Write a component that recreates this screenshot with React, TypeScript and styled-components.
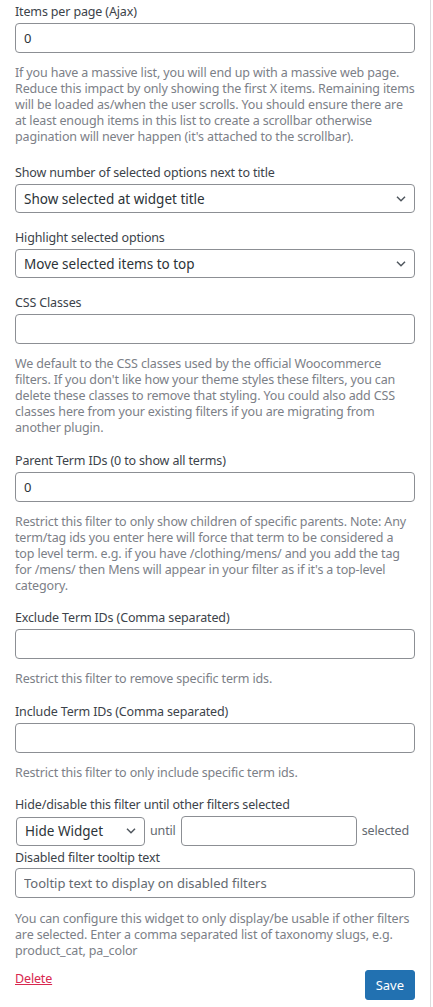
import styled, { createGlobalStyle } from "styled-components";

const GlobalStyle = createGlobalStyle`
  html, body {
    margin: 0;
    padding: 0;
    background: #fff;
  }
  body {
    font-family: "Noto Sans", "Open Sans", sans-serif;
  }
`;

const Panel = styled.form`
  box-sizing: border-box;
  width: 431px;
  min-height: 1007px;
  padding: 4px 15px 0 15px;
  border-right: 1px solid #dcdcde;
  font-size: 12.5px;
  letter-spacing: -0.15px;
  line-height: 16px;
  color: #3c434a;
`;

const Field = styled.div<{ $gap?: number }>`
  margin-bottom: ${({ $gap = 17 }) => $gap}px;
`;

const Label = styled.label<{ $gap?: number }>`
  display: block;
  margin-bottom: ${({ $gap = 3 }) => $gap}px;
`;

const TextInput = styled.input<{ $width?: string }>`
  box-sizing: border-box;
  display: block;
  width: ${({ $width = "100%" }) => $width};
  height: 30px;
  margin: 0;
  padding: 0 8px;
  border: 1px solid #8c8f94;
  border-radius: 4px;
  background: #fff;
  font-family: "Noto Sans", sans-serif;
  font-size: 13px;
  color: #2c3338;
  outline: none;

  &::placeholder {
    color: #646970;
    opacity: 1;
  }
`;

const SelectWrap = styled.div<{ $width?: string }>`
  position: relative;
  width: ${({ $width = "100%" }) => $width};
  flex-shrink: 0;
`;

const Select = styled.select`
  box-sizing: border-box;
  display: block;
  width: 100%;
  height: 29px;
  margin: 0;
  padding: 0 24px 0 8px;
  border: 1px solid #8c8f94;
  border-radius: 4px;
  background: #fff;
  appearance: none;
  font-family: "Noto Sans", sans-serif;
  font-size: 13.5px;
  color: #2c3338;
  outline: none;
`;

const Chevron = styled.svg`
  position: absolute;
  right: 9px;
  top: 50%;
  margin-top: -3px;
  pointer-events: none;
`;

const Description = styled.p<{ $gap?: number }>`
  margin: ${({ $gap = 12 }) => $gap}px 0 0;
  color: #7c8087;
`;

const InlineRow = styled.div`
  display: flex;
  align-items: center;
  gap: 5px;
  padding-left: 1px;
`;

const InlineText = styled.span`
  color: #646970;
  white-space: nowrap;
`;

const Actions = styled.div`
  display: flex;
  justify-content: space-between;
  align-items: flex-start;
  margin-top: 11px;
`;

const DeleteLink = styled.a`
  margin-top: 1px;
  color: #d8284f;
  text-decoration: underline;
  cursor: pointer;
`;

const SaveButton = styled.button`
  height: 30px;
  padding: 0 10px;
  border: 1px solid #2271b1;
  border-radius: 3px;
  background: #2271b1;
  color: #fff;
  font-family: "Noto Sans", sans-serif;
  font-size: 13px;
  cursor: pointer;
`;

const DropDown = ({
  value,
  width,
}: {
  value: string;
  width?: string;
}) => (
  <SelectWrap $width={width}>
    <Select defaultValue={value}>
      <option>{value}</option>
    </Select>
    <Chevron width="10" height="6" viewBox="0 0 10 6">
      <path
        d="M1 0.8 L5 4.8 L9 0.8"
        fill="none"
        stroke="#50575e"
        strokeWidth="1.5"
      />
    </Chevron>
  </SelectWrap>
);

const App = () => (
  <>
    <GlobalStyle />
    <Panel onSubmit={(e) => e.preventDefault()}>
      <Field $gap={20}>
        <Label>Items per page (Ajax)</Label>
        <TextInput defaultValue="0" />
        <Description>
          If you have a massive list, you will end up with a massive web page.
          Reduce this impact by only showing the first X items. Remaining
          items will be loaded as/when the user scrolls. You should ensure
          there are at least enough items in this list to create a scrollbar
          otherwise pagination will never happen (it's attached to the
          scrollbar).
        </Description>
      </Field>

      <Field>
        <Label>Show number of selected options next to title</Label>
        <DropDown value="Show selected at widget title" />
      </Field>

      <Field>
        <Label>Highlight selected options</Label>
        <DropDown value="Move selected items to top" />
      </Field>

      <Field>
        <Label>CSS Classes</Label>
        <TextInput />
        <Description>
          We default to the CSS classes used by the official Woocommerce
          filters. If you don't like how your theme styles these filters, you
          can delete these classes to remove that styling. You could also add
          CSS classes here from your existing filters if you are migrating
          from another plugin.
        </Description>
      </Field>

      <Field $gap={16}>
        <Label>Parent Term IDs (0 to show all terms)</Label>
        <TextInput defaultValue="0" />
        <Description>
          Restrict this filter to only show children of specific parents.
          Note: Any term/tag ids you enter here will force that term to be
          considered a top level term. e.g. if you have /clothing/mens/ and
          you add the tag for /mens/ then Mens will appear in your filter as
          if it's a top-level category.
        </Description>
      </Field>

      <Field>
        <Label>Exclude Term IDs (Comma separated)</Label>
        <TextInput />
        <Description>Restrict this filter to remove specific term ids.</Description>
      </Field>

      <Field $gap={16}>
        <Label>Include Term IDs (Comma separated)</Label>
        <TextInput />
        <Description>
          Restrict this filter to only include specific term ids.
        </Description>
      </Field>

      <Field $gap={4}>
        <Label $gap={3}>Hide/disable this filter until other filters selected</Label>
        <InlineRow>
          <DropDown value="Hide Widget" width="129px" />
          <InlineText>until</InlineText>
          <TextInput $width="176px" />
          <InlineText>selected</InlineText>
        </InlineRow>
      </Field>

      <Field $gap={0}>
        <Label $gap={2}>Disabled filter tooltip text</Label>
        <TextInput placeholder="Tooltip text to display on disabled filters" />
        <Description $gap={13}>
          You can configure this widget to only display/be usable if other
          filters are selected. Enter a comma separated list of taxonomy
          slugs, e.g. product_cat, pa_color
        </Description>
      </Field>

      <Actions>
        <DeleteLink>Delete</DeleteLink>
        <SaveButton type="submit">Save</SaveButton>
      </Actions>
    </Panel>
  </>
);

export default App;
